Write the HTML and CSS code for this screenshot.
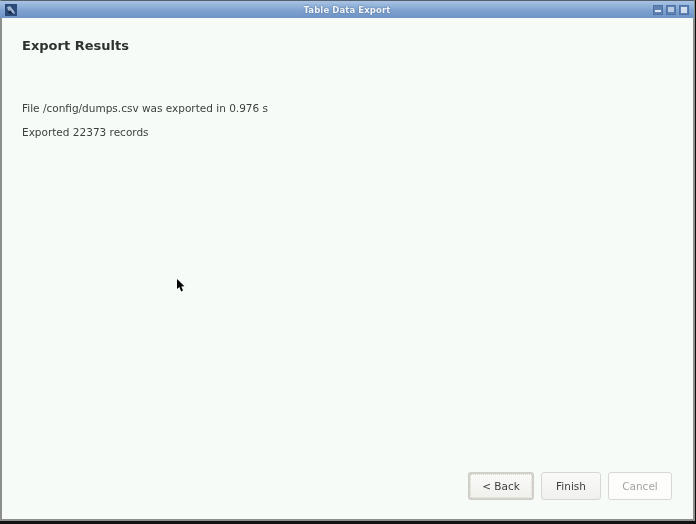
FILE: index.html
```
<!DOCTYPE html>
<html lang="en">
<head>
<meta charset="utf-8">
<title>Table Data Export</title>
<link rel="stylesheet" href="styles.css">
</head>
<body>
<div class="window">
  <header class="titlebar">
    <svg class="app-icon" width="12" height="12" viewBox="0 0 12 12"><rect width="12" height="12" fill="#2b4a78"/><path d="M2 3 L5 2 L9 7 L10 10 L7 9 L3 6Z" fill="#9fb4cf"/><path d="M3 9 L5 6 L8 10Z" fill="#10233f"/></svg>
    <div class="title">Table Data Export</div>
    <div class="controls">
      <span class="ctl"><i class="g-min"></i></span>
      <span class="ctl"><i class="g-max"></i></span>
      <span class="ctl"><i class="g-close"></i></span>
    </div>
  </header>
  <main class="content">
    <h1>Export Results</h1>
    <p class="line-a">File /config/dumps.csv was exported in 0.976 s</p>
    <p class="line-b">Exported 22373 records</p>
    <div class="actions">
      <button class="btn focused">&lt; Back</button>
      <button class="btn">Finish</button>
      <button class="btn disabled">Cancel</button>
    </div>
    <svg class="cursor" width="10" height="15" viewBox="0 0 10 15"><path d="M1 1 L1 11 L3.4 9 L5.2 13.4 L7 12.6 L5.3 8.6 L8.4 8.3Z" fill="#000"/></svg>
  </main>
</div>
</body>
</html>
```
FILE: styles.css
```
* { box-sizing: border-box; }
html, body { margin: 0; padding: 0; background: #111; }
body { width: 696px; height: 524px; overflow: hidden; font-family: "DejaVu Sans", sans-serif; }
.window { width: 695px; height: 521px; display: flex; flex-direction: column; border-left: 2px solid #8d8f8c; border-right: 2px solid #8d8f8c; border-bottom: 2px solid #8d8f8c; border-top: 1px solid #55606e; background: #f6fbf7; filter: blur(0.5px); }
.titlebar { height: 17px; flex: none; display: grid; grid-template-columns: 1fr auto 1fr; align-items: center; margin: 0 -1px 0 -2px; padding: 0 5px 0 5px; background: linear-gradient(#a9c4e4, #7fa3d0 55%, #6d93c6); }
.app-icon { display: block; }
.title { text-align: center; color: #f2f5f8; font: bold 8.5px "DejaVu Sans", sans-serif; text-shadow: 0 0 2px #44648f; letter-spacing: 0.1px; }
.controls { display: flex; gap: 3px; justify-self: end; }
.ctl { width: 10px; height: 10px; background: #5d81b2; border: 1px solid #4f73a6; display: flex; align-items: center; justify-content: center; }
.ctl i { display: block; background: #dfe8f3; }
.g-min { width: 6px; height: 2px; margin-top: 3px; }
.g-max { width: 6px; height: 5px; opacity: .7; }
.g-close { width: 6px; height: 6px; opacity: .9; }
.content { flex: 1; position: relative; display: flex; flex-direction: column; padding: 0 20px; color: #3a3c3a; }
h1 { margin: 20px 0 0; font-size: 13px; line-height: 16px; font-weight: bold; color: #2e3330; }
p { margin: 0; font-size: 10.5px; line-height: 14px; color: #3d403e; }
.line-a { margin-top: 47px; }
.line-b { margin-top: 10px; }
.actions { margin-top: auto; margin-bottom: 19px; align-self: flex-end; display: flex; gap: 7px; margin-right: 1px; }
.btn { height: 28px; font: 10.5px "DejaVu Sans", sans-serif; color: #3d403e; background: linear-gradient(#fafaf8, #f0f0ed); border: 1px solid #d8d7d1; border-radius: 3px; padding: 0 0 1px; width: 60px; }
.btn.focused { width: 66px; border: 2px solid #d0cfc9; outline: 1px dotted #d8d7d0; outline-offset: -3px; }
.btn.disabled { width: 64px; background: #fdfdfc; color: #a2a4a1; }
.cursor { position: absolute; left: 174px; top: 260px; }
```
